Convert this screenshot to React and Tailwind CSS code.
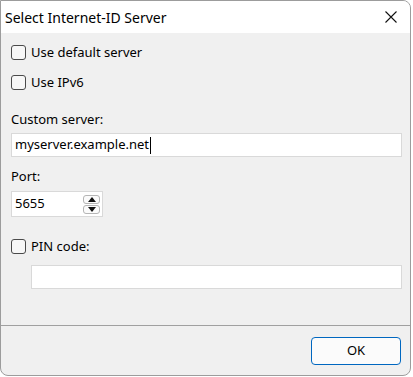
import React from "react";

const font = { fontFamily: '"Noto Sans", "Open Sans", sans-serif' };

const Check = ({ label }) => (
  <div className="flex h-[20px] items-center">
    <span className="h-[15px] w-[15px] rounded-[3px] border border-[#4a4a4a] bg-[#f7f7f7]" />
    <span className="ml-[5px] text-[13px] leading-none text-black">{label}</span>
  </div>
);

const SpinBtn = ({ up }) => (
  <div className="flex h-[9px] w-[17px] items-center justify-center rounded-[3px] border border-[#b5b5b5] bg-[#fbfbfb]">
    <svg width="8" height="5" viewBox="0 0 8 5">
      {up ? <path d="M0 5 L4 0 L8 5 Z" fill="#111" /> : <path d="M0 0 L8 0 L4 5 Z" fill="#111" />}
    </svg>
  </div>
);

export default function App() {
  return (
    <div className="h-[377px] w-[413px] bg-white" style={font}>
      <div className="flex h-[376px] w-[411px] flex-col overflow-hidden rounded-tr-lg rounded-b-lg border border-[#9c9c9c] bg-[#f0f0f0]">
        {/* title bar */}
        <div className="flex h-[32px] shrink-0 items-center justify-between bg-white pl-[4px] pr-[13px]">
          <span className="text-[14px] text-black">Select Internet-ID Server</span>
          <svg width="12" height="12" viewBox="0 0 12 12">
            <path d="M0.5 0.5 L11.5 11.5 M11.5 0.5 L0.5 11.5" stroke="#111" strokeWidth="1.1" />
          </svg>
        </div>

        {/* body */}
        <div className="flex h-[292px] shrink-0 flex-col pl-[10px] pr-[8px] pt-[9px]">
          <Check label="Use default server" />
          <div className="mt-[10px]">
            <Check label="Use IPv6" />
          </div>
          <div className="mt-[18px] flex h-[20px] items-center text-[13px] text-black">Custom server:</div>
          <div className="mt-[3px] flex h-[24px] items-center border border-[#d9d9d9] bg-white pl-[3px] text-[13px] text-black">
            <span>myserver.example.net</span>
            <span className="ml-px h-[17px] w-px bg-black" />
          </div>
          <div className="mt-[10px] flex h-[20px] items-center text-[13px] text-black">Port:</div>
          <div className="mt-[4px] flex h-[26px] w-[92px] items-center justify-between border border-[#d9d9d9] bg-white pl-[3px] pr-[2px] text-[13px] text-black">
            <span>5655</span>
            <div className="flex flex-col gap-px">
              <SpinBtn up />
              <SpinBtn />
            </div>
          </div>
          <div className="mt-[19px]">
            <Check label="PIN code:" />
          </div>
          <div className="ml-[20px] mt-[9px] h-[24px] border border-[#d9d9d9] bg-white" />
        </div>

        {/* footer */}
        <div className="flex flex-1 justify-end border-t border-[#a0a0a0] pr-[9px] pt-[11px]">
          <button className="flex h-[28px] w-[90px] items-center justify-center rounded-[4px] border border-[#0067c0] bg-[#fbfbfb] text-[13px] text-black">
            OK
          </button>
        </div>
      </div>
    </div>
  );
}
